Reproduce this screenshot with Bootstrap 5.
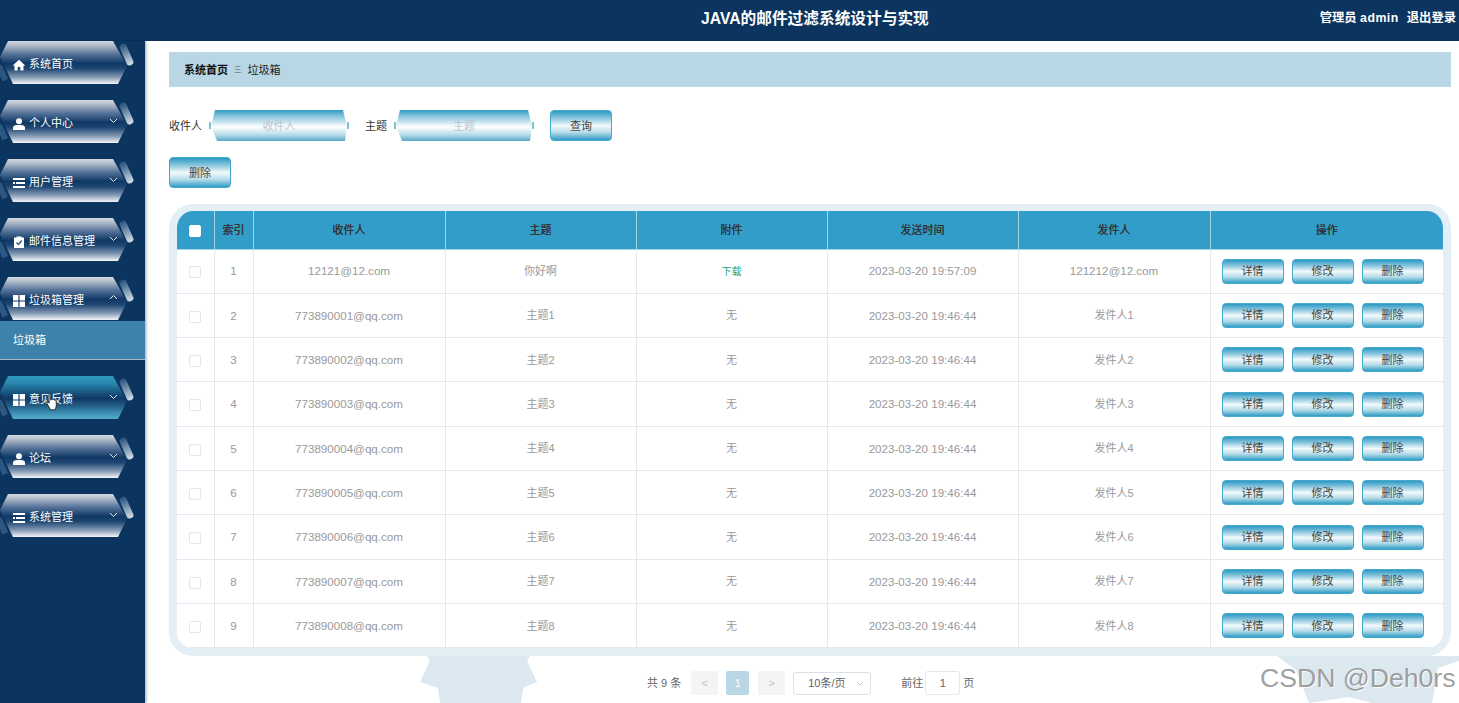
<!DOCTYPE html>
<html lang="zh">
<head>
<meta charset="utf-8">
<link href="https://cdn.jsdelivr.net/npm/bootstrap@5.3.0/dist/css/bootstrap.min.css" rel="stylesheet">
<style>
html,body{height:703px;overflow:hidden}
body{font-family:"Liberation Sans","Noto Sans CJK SC",sans-serif;font-size:11px;color:#333;background:#fff}
.app-top{height:41px;background:#0b345f;color:#fff;padding-left:170px;padding-right:3px;border-bottom:1px solid #0a2f56}
.app-title{font-size:15.7px;font-weight:700;line-height:37px;margin-left:531px}
.app-user{font-size:12.3px;font-weight:700;line-height:36px;gap:8px}
.app-user em{font-style:normal;letter-spacing:.5px}
.app-shell{height:662px}
.side{width:145px;flex:none;background:#0b345f;position:relative;box-shadow:1px 0 3px rgba(10,46,84,.45);z-index:2}
.mitem{height:43px;margin-bottom:16px;position:relative;color:#fff;font-size:11px}
.hex{position:absolute;left:0;top:0;width:127px;height:43px;clip-path:polygon(8px 0,113px 0,127px 25px,118px 43px,13px 43px,0 16px);background:linear-gradient(180deg,#d4dae3 0,#aab6c6 12%,#57749a 30%,#0f3865 52%,#1d4672 64%,#8499b3 84%,#f4f7fa 100%)}
.mitem.hot .hex{background:linear-gradient(180deg,#2f98bf 0,#2a8bb2 14%,#1b6088 34%,#0f3865 52%,#215a82 68%,#3e8fb3 86%,#55aecb 100%)}
.slash-r{position:absolute;left:123px;top:2px;width:7px;height:23px;border-radius:3px;background:linear-gradient(180deg,#244f7b,#d5dfe9);transform:rotate(-24deg)}
.slash-l{position:absolute;left:-1px;top:24px;width:6px;height:16px;background:#2d5680;transform:rotate(-24deg)}
.mrow{position:relative;height:43px;padding:4px 0 0 13px;gap:4px}
.mico{width:12px;height:12px;flex:none}
.chev{position:absolute;left:109px;top:16px;width:9px;height:9px}
.subitem{height:39px;background:#3d82aa;border-bottom:1px solid #a9b5c0;color:#fff;padding-left:13px;line-height:38px;margin:-15px 0 16px;font-size:11px}
.work{flex:1;position:relative;padding:11px 8px 0 24px;overflow:hidden;background:#fff}
.gear{position:absolute;fill:#dce8ef;z-index:0;left:0;top:0;width:1314px;height:662px}
.work>*:not(.gear){position:relative;z-index:1}
.crumb{height:35px;background:#b8d6e3;padding:1px 0 0 14px;font-size:11px;color:#222;gap:6px;border:1px solid #bcd9e5}
.crumb b{color:#111}
.crumb i{font-style:normal;color:#555;font-size:7.5px}
.qline{margin-top:23px;height:31px}
.qlab{color:#333;margin-right:7px;font-size:11px;padding-top:2px}
.qbox{width:140px;height:31px;position:relative;margin-right:16px;flex:none;background:linear-gradient(#7cc5cf,#7cc5cf) 0 50%/2px 7px no-repeat,linear-gradient(#7cc5cf,#7cc5cf) 100% 50%/2px 7px no-repeat}
.qbox::before{content:"";position:absolute;left:2px;top:0;right:2px;bottom:0;clip-path:polygon(4px 0,132px 0,136px 16px,134px 31px,6px 31px,0 16px);background:linear-gradient(180deg,#2e9bc4 0,#7fc0da 18%,#eaf5f9 48%,#fff 55%,#b7dbe8 80%,#57a9c9 100%)}
.qbox input{position:relative;width:100%;height:100%;border:0;background:transparent;text-align:center;font:11px "Liberation Sans","Noto Sans CJK SC",sans-serif;outline:0}
.qbox input::placeholder{color:#c0c4cc;opacity:1}
.gbtn,.gbtn:hover{background:linear-gradient(180deg,#2c9ac3 0,#7ec0da 22%,#f2f9fb 50%,#b5dbe8 74%,#2f9cc5 100%);border:1px solid #46a8cd;border-radius:4px;color:#444;font-size:11px;padding:1px 0 0;line-height:1;display:inline-flex;align-items:center;justify-content:center}
.gbtn.big{width:62px;height:31px}
.gbtn.sm-btn{width:62px;height:25px}
.delline{margin-top:16px;height:31px}
.tframe{margin-top:16px;border:solid #e3eff5;border-width:7px 8px 8px;border-radius:24px;background:#fff;height:452px;overflow:hidden}
.dtable{table-layout:fixed;width:1266px;margin:0;border-collapse:collapse;font-size:11.6px;color:#999}
.dtable th{height:38px;background:#319dc8;color:#333;font-size:11px;font-weight:400;text-align:center;vertical-align:middle;border-right:1px solid #a6d4e6;padding:0;text-shadow:0 0 0 #333}
.dtable thead{border-bottom:1px solid #a6d4e6}
.dtable th:last-child,.dtable td:last-child{border-right:0}
.dtable td{height:44.33px;text-align:center;vertical-align:middle;border-right:1px solid #e4e7ed;border-bottom:1px solid #e4e7ed;padding:0;color:#999;background:#fff}
.dtable td.fine{font-size:11px}
.dtable td.lnk{color:#13a37f;font-size:10px}
.ckb{display:inline-block;width:12px;height:12px;background:#fff;border:1px solid #e2e5ea;border-radius:2px;vertical-align:middle}
.ckb.top{border-color:#fff}
.opgap{gap:8px;padding-left:11px}
.pager{margin-top:13px;height:28px;padding-left:478px;color:#666;font-size:11px}
.pgtot{margin-right:10px}
.pgb{width:27px;height:24px;background:#f4f4f5;color:#c0c4cc;display:flex;align-items:center;justify-content:center;border-radius:2px;font-size:11px}
.pgb.on{background:#b8d6e3;color:#fff;width:23px;margin:0 9px 0 8px}
.pgs{width:78px;height:23px;border:1px solid #dcdfe6;border-radius:3px;margin-left:8px;padding:0 6px 0 14px;color:#606266;background:#fff}
.pggo{margin-left:30px}
.pgi{width:35px;height:24px;border:1px solid #e4e7ed;border-radius:3px;background:#fff;text-align:center;line-height:22px;color:#606266;margin:0 3px 0 2px}
.wmark{position:absolute;left:1260px;top:661px;font-family:"Liberation Sans",sans-serif;font-size:26.6px;color:rgba(135,135,135,.8);text-shadow:1px 1px 0 rgba(255,255,255,.8);line-height:34px;z-index:5;white-space:nowrap}
.cursor{position:absolute;left:46px;top:393px;width:13px;height:18px;z-index:6}
</style>
</head>
<body>
<div class="app-top d-flex justify-content-between align-items-start">
  <div class="app-title">JAVA的邮件过滤系统设计与实现</div>
  <div class="app-user d-flex"><span>管理员 <em>admin</em></span><span>退出登录</span></div>
</div>
<div class="app-shell d-flex">
  <div class="side">
    <div class="mitem"><div class="slash-l"></div><div class="hex"></div><div class="slash-r"></div>
      <div class="mrow d-flex align-items-center"><svg class="mico" viewBox="0 0 12 12"><path fill="#fff" d="M6 .8 0 6.2l.8.8L1.500 6.400V11.500h3.200V8h2.600v3.500h3.200V6.400l.7.6.8-.8z"/></svg>系统首页</div></div>
    <div class="mitem"><div class="slash-l"></div><div class="hex"></div><div class="slash-r"></div>
      <div class="mrow d-flex align-items-center"><svg class="mico" viewBox="0 0 12 12"><circle cx="6" cy="3.2" r="3" fill="#fff"/><path fill="#fff" d="M0 12V9.800C0 8 2 7 3.500 7h5C10 7 12 8 12 9.800V12z"/></svg>个人中心</div>
      <svg class="chev" viewBox="0 0 9 9"><path d="M1 3l3.500 3.500L8 3" fill="none" stroke="#dfe6ee"/></svg></div>
    <div class="mitem"><div class="slash-l"></div><div class="hex"></div><div class="slash-r"></div>
      <div class="mrow d-flex align-items-center"><svg class="mico" viewBox="0 0 12 12"><path fill="#fff" d="M0 1h12v2H0zM3 5h9v2H3zM0 5h2v2H0zM0 9h12v2H0z"/></svg>用户管理</div>
      <svg class="chev" viewBox="0 0 9 9"><path d="M1 3l3.500 3.500L8 3" fill="none" stroke="#dfe6ee"/></svg></div>
    <div class="mitem"><div class="slash-l"></div><div class="hex"></div><div class="slash-r"></div>
      <div class="mrow d-flex align-items-center"><svg class="mico" viewBox="0 0 12 12"><path fill="#fff" d="M1 1.500h2.500V.5h5v1H11V12H1z"/><path d="M3.500 6.500 5.500 8.500 8.800 4.500" fill="none" stroke="#3a5a80" stroke-width="1.400"/></svg>邮件信息管理</div>
      <svg class="chev" viewBox="0 0 9 9"><path d="M1 3l3.500 3.500L8 3" fill="none" stroke="#dfe6ee"/></svg></div>
    <div class="mitem"><div class="slash-l"></div><div class="hex"></div><div class="slash-r"></div>
      <div class="mrow d-flex align-items-center"><svg class="mico" viewBox="0 0 12 12"><path fill="#fff" d="M0 0h5.400v5.400H0zM6.600 0H12v5.400H6.600zM0 6.600h5.400V12H0zM6.600 6.600H12V12H6.600z"/></svg>垃圾箱管理</div>
      <svg class="chev" viewBox="0 0 9 9"><path d="M1 6l3.500-3.500L8 6" fill="none" stroke="#dfe6ee"/></svg></div>
    <div class="subitem">垃圾箱</div>
    <div class="mitem hot"><div class="slash-l"></div><div class="hex"></div><div class="slash-r"></div>
      <div class="mrow d-flex align-items-center"><svg class="mico" viewBox="0 0 12 12"><path fill="#fff" d="M0 0h5.400v5.400H0zM6.600 0H12v5.400H6.600zM0 6.600h5.400V12H0zM6.600 6.600H12V12H6.600z"/></svg>意见反馈</div>
      <svg class="chev" viewBox="0 0 9 9"><path d="M1 3l3.500 3.500L8 3" fill="none" stroke="#dfe6ee"/></svg></div>
    <div class="mitem"><div class="slash-l"></div><div class="hex"></div><div class="slash-r"></div>
      <div class="mrow d-flex align-items-center"><svg class="mico" viewBox="0 0 12 12"><circle cx="6" cy="3.2" r="3" fill="#fff"/><path fill="#fff" d="M0 12V9.800C0 8 2 7 3.500 7h5C10 7 12 8 12 9.800V12z"/></svg>论坛</div>
      <svg class="chev" viewBox="0 0 9 9"><path d="M1 3l3.500 3.500L8 3" fill="none" stroke="#dfe6ee"/></svg></div>
    <div class="mitem"><div class="slash-l"></div><div class="hex"></div><div class="slash-r"></div>
      <div class="mrow d-flex align-items-center"><svg class="mico" viewBox="0 0 12 12"><path fill="#fff" d="M0 1h12v2H0zM3 5h9v2H3zM0 5h2v2H0zM0 9h12v2H0z"/></svg>系统管理</div>
      <svg class="chev" viewBox="0 0 9 9"><path d="M1 3l3.500 3.500L8 3" fill="none" stroke="#dfe6ee"/></svg></div>
  </div>
  <div class="work">
    <svg class="gear" viewBox="0 0 1314 662"><path d="M282 615h103l-3 5 10 21-14 6-2 15H295l-2-15-18-6 10-21z"/><path d="M1132 615h182v5l-21 7-6 35h-60l-23-6-40 6-13-33z"/></svg>
    <div class="crumb d-flex align-items-center"><b>系统首页</b><i>三</i><span>垃圾箱</span></div>
    <div class="qline d-flex align-items-center">
      <span class="qlab">收件人</span>
      <div class="qbox"><input placeholder="收件人" aria-label="收件人"></div>
      <span class="qlab">主题</span>
      <div class="qbox"><input placeholder="主题" aria-label="主题"></div>
      <button class="btn gbtn big" type="button">查询</button>
    </div>
    <div class="delline"><button class="btn gbtn big" type="button">删除</button></div>
    <div class="tframe">
      <table class="dtable">
        <colgroup><col style="width:37px"><col style="width:39px"><col style="width:192px"><col style="width:191px"><col style="width:191px"><col style="width:191px"><col style="width:192px"><col style="width:233px"></colgroup>
        <thead><tr><th><span class="ckb top"></span></th><th>索引</th><th>收件人</th><th>主题</th><th>附件</th><th>发送时间</th><th>发件人</th><th>操作</th></tr></thead>
        <tbody>
          <tr><td><span class="ckb"></span></td><td>1</td><td>12121@12.com</td><td class="fine">你好啊</td><td class="lnk">下载</td><td>2023-03-20 19:57:09</td><td>121212@12.com</td><td><div class="d-flex opgap"><button class="btn gbtn sm-btn" type="button">详情</button><button class="btn gbtn sm-btn" type="button">修改</button><button class="btn gbtn sm-btn" type="button">删除</button></div></td></tr>
          <tr><td><span class="ckb"></span></td><td>2</td><td>773890001@qq.com</td><td class="fine">主题1</td><td class="fine">无</td><td>2023-03-20 19:46:44</td><td class="fine">发件人1</td><td><div class="d-flex opgap"><button class="btn gbtn sm-btn" type="button">详情</button><button class="btn gbtn sm-btn" type="button">修改</button><button class="btn gbtn sm-btn" type="button">删除</button></div></td></tr>
          <tr><td><span class="ckb"></span></td><td>3</td><td>773890002@qq.com</td><td class="fine">主题2</td><td class="fine">无</td><td>2023-03-20 19:46:44</td><td class="fine">发件人2</td><td><div class="d-flex opgap"><button class="btn gbtn sm-btn" type="button">详情</button><button class="btn gbtn sm-btn" type="button">修改</button><button class="btn gbtn sm-btn" type="button">删除</button></div></td></tr>
          <tr><td><span class="ckb"></span></td><td>4</td><td>773890003@qq.com</td><td class="fine">主题3</td><td class="fine">无</td><td>2023-03-20 19:46:44</td><td class="fine">发件人3</td><td><div class="d-flex opgap"><button class="btn gbtn sm-btn" type="button">详情</button><button class="btn gbtn sm-btn" type="button">修改</button><button class="btn gbtn sm-btn" type="button">删除</button></div></td></tr>
          <tr><td><span class="ckb"></span></td><td>5</td><td>773890004@qq.com</td><td class="fine">主题4</td><td class="fine">无</td><td>2023-03-20 19:46:44</td><td class="fine">发件人4</td><td><div class="d-flex opgap"><button class="btn gbtn sm-btn" type="button">详情</button><button class="btn gbtn sm-btn" type="button">修改</button><button class="btn gbtn sm-btn" type="button">删除</button></div></td></tr>
          <tr><td><span class="ckb"></span></td><td>6</td><td>773890005@qq.com</td><td class="fine">主题5</td><td class="fine">无</td><td>2023-03-20 19:46:44</td><td class="fine">发件人5</td><td><div class="d-flex opgap"><button class="btn gbtn sm-btn" type="button">详情</button><button class="btn gbtn sm-btn" type="button">修改</button><button class="btn gbtn sm-btn" type="button">删除</button></div></td></tr>
          <tr><td><span class="ckb"></span></td><td>7</td><td>773890006@qq.com</td><td class="fine">主题6</td><td class="fine">无</td><td>2023-03-20 19:46:44</td><td class="fine">发件人6</td><td><div class="d-flex opgap"><button class="btn gbtn sm-btn" type="button">详情</button><button class="btn gbtn sm-btn" type="button">修改</button><button class="btn gbtn sm-btn" type="button">删除</button></div></td></tr>
          <tr><td><span class="ckb"></span></td><td>8</td><td>773890007@qq.com</td><td class="fine">主题7</td><td class="fine">无</td><td>2023-03-20 19:46:44</td><td class="fine">发件人7</td><td><div class="d-flex opgap"><button class="btn gbtn sm-btn" type="button">详情</button><button class="btn gbtn sm-btn" type="button">修改</button><button class="btn gbtn sm-btn" type="button">删除</button></div></td></tr>
          <tr><td><span class="ckb"></span></td><td>9</td><td>773890008@qq.com</td><td class="fine">主题8</td><td class="fine">无</td><td>2023-03-20 19:46:44</td><td class="fine">发件人8</td><td><div class="d-flex opgap"><button class="btn gbtn sm-btn" type="button">详情</button><button class="btn gbtn sm-btn" type="button">修改</button><button class="btn gbtn sm-btn" type="button">删除</button></div></td></tr>
        </tbody>
      </table>
    </div>
    <div class="pager d-flex align-items-center">
      <span class="pgtot">共 9 条</span>
      <span class="pgb">&lt;</span><span class="pgb on">1</span><span class="pgb">&gt;</span>
      <div class="pgs d-flex align-items-center justify-content-between"><span>10条/页</span><svg width="8" height="8" viewBox="0 0 8 8"><path d="M1 3l3 3 3-3" fill="none" stroke="#c0c4cc"/></svg></div>
      <span class="pggo">前往</span><span class="pgi">1</span><span>页</span>
    </div>
  </div>
</div>
<svg class="cursor" viewBox="0 0 13 18"><path fill="#fff" stroke="#1c2530" stroke-width="1" d="M3 1.200c0-1 1.800-1 1.800 0v6l.4-.9c.5-.6 1.600-.4 1.700.4.4-.6 1.600-.4 1.700.5.5-.5 1.600-.2 1.600.7l.1 4c0 2-.6 3-1.500 5H4.500L1 10.500c-.6-1 .5-1.800 1.300-1.100l.7.800z"/></svg>
<div class="wmark">CSDN @Deh0rs</div>
</body>
</html>
